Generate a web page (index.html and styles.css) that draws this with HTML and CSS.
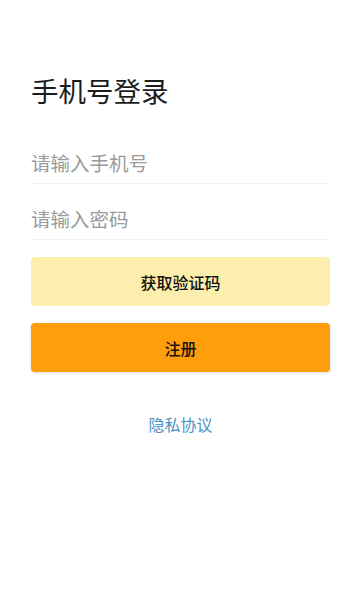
FILE: index.html
```html
<!DOCTYPE html>
<html lang="zh-CN">
<head>
<meta charset="utf-8">
<meta name="viewport" content="width=device-width, initial-scale=1">
<title>手机号登录</title>
<link rel="stylesheet" href="styles.css">
</head>
<body>
<main class="page">
  <h1 class="title">手机号登录</h1>
  <form class="form">
    <div class="field"><input class="input" type="tel" placeholder="请输入手机号"></div>
    <div class="field"><input class="input" type="password" placeholder="请输入密码"></div>
    <button type="button" class="btn btn-code">获取验证码</button>
    <button type="button" class="btn btn-register">注册</button>
  </form>
  <a class="privacy" href="#">隐私协议</a>
</main>
</body>
</html>
```
FILE: styles.css
```css
* { box-sizing: border-box; }
html, body { margin: 0; padding: 0; background: #ffffff; }
body {
  font-family: "Noto Sans CJK SC", "Noto Sans", sans-serif;
  color: #1a1a1a;
}
.page {
  display: flex;
  flex-direction: column;
  padding: 70px 30px 0 31px;
}
.title {
  margin: 0;
  font-size: 27.5px;
  line-height: 40px;
  font-weight: 400;
  color: #1c1c1c;
}
.form {
  display: flex;
  flex-direction: column;
  margin-top: 18px;
}
.field {
  height: 56px;
  padding-top: 14px;
  border-bottom: 1px solid #efefef;
}
.input {
  display: block;
  width: 100%;
  height: 40px;
  border: 0;
  outline: none;
  padding: 0;
  background: transparent;
  font-family: inherit;
  font-size: 19.5px;
  color: #333;
}
.input::placeholder { color: #9a9a9a; }
.btn {
  height: 49px;
  border: 0;
  border-radius: 4px;
  font-family: inherit;
  font-size: 16px;
  font-weight: 500;
  color: #111;
  padding: 0;
}
.btn-code {
  margin-top: 17px;
  background: #fcefae;
}
.btn-register {
  margin-top: 17px;
  background: #fe9e0a;
  box-shadow: 0 1px 3px rgba(0, 0, 0, 0.15);
}
.privacy {
  align-self: center;
  margin-top: 40px;
  font-size: 16px;
  line-height: 24px;
  color: #4b93c8;
  text-decoration: none;
}
```
